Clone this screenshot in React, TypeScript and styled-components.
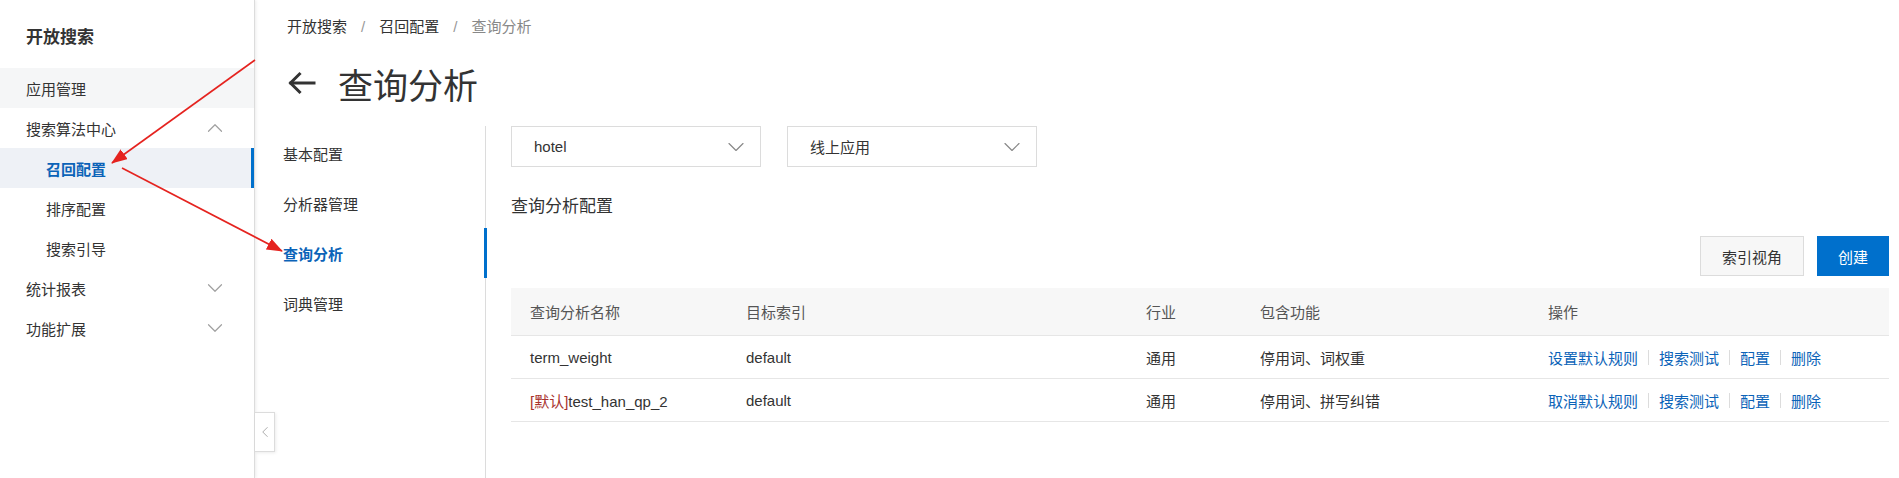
import React from "react";
import styled, { createGlobalStyle } from "styled-components";
import { ChevronDown, ChevronUp, ChevronLeft } from "lucide-react";

const GlobalStyle = createGlobalStyle`
  html, body {
    margin: 0;
    padding: 0;
    background: #fff;
  }
  body {
    font-family: "Liberation Sans", "Noto Sans CJK SC", sans-serif;
    color: #333;
  }
  * {
    box-sizing: border-box;
  }
`;

const Page = styled.div`
  position: relative;
  display: flex;
  width: 100%;
  height: 100vh;
  overflow: hidden;
`;

const Sidebar = styled.aside`
  position: relative;
  width: 255px;
  flex-shrink: 0;
  height: 100%;
  background: #fff;
  border-right: 1px solid #dcdcdc;
  box-shadow: 1px 0 3px rgba(0, 0, 0, 0.08);
  z-index: 1;
`;

const SideTitle = styled.div`
  height: 68px;
  padding: 27px 0 0 26px;
  font-size: 17px;
  font-weight: 700;
  line-height: 22px;
  color: #333;
`;

const MenuRow = styled.div<{ $sub?: boolean; $active?: boolean; $shade?: boolean }>`
  position: relative;
  display: flex;
  align-items: center;
  justify-content: space-between;
  height: 40px;
  padding: 0 26px 0 ${(p) => (p.$sub ? "46px" : "26px")};
  font-size: 15px;
  color: ${(p) => (p.$active ? "#0b63b8" : "#333")};
  font-weight: ${(p) => (p.$active ? 700 : 400)};
  background: ${(p) => (p.$active ? "#eef1f6" : p.$shade ? "#f5f6f7" : "transparent")};

  &::after {
    content: "";
    display: ${(p) => (p.$active ? "block" : "none")};
    position: absolute;
    right: 0;
    top: 0;
    bottom: 0;
    width: 3px;
    background: #0070cc;
  }

  & > svg {
    color: #a0a0a0;
  }
`;

const CollapseTab = styled.div`
  position: absolute;
  top: 412px;
  right: -21px;
  width: 20px;
  height: 40px;
  display: flex;
  align-items: center;
  justify-content: center;
  background: #fff;
  border: 1px solid #dcdcdc;
  border-left: none;
  box-shadow: 1px 1px 3px rgba(0, 0, 0, 0.08);
  color: #aaa;
`;

const Main = styled.main`
  flex: 1;
  display: flex;
  flex-direction: column;
  min-width: 0;
`;

const Header = styled.div`
  padding: 17px 0 0 32px;
`;

const Crumbs = styled.div`
  display: flex;
  align-items: center;
  gap: 14px;
  font-size: 15px;
  line-height: 20px;
  color: #333;
`;

const Crumb = styled.span<{ $current?: boolean }>`
  color: ${(p) => (p.$current ? "#888" : "#333")};
`;

const Slash = styled.span`
  color: #999;
`;

const TitleRow = styled.h1`
  display: flex;
  align-items: center;
  gap: 22px;
  margin: 24px 0 0;
  height: 44px;
  font-size: 35px;
  font-weight: 400;
  color: #333;
`;

const Body = styled.div`
  flex: 1;
  display: flex;
  margin-top: 21px;
`;

const SubNav = styled.nav`
  width: 231px;
  flex-shrink: 0;
  border-right: 1px solid #dcdcdc;
  padding-top: 2px;
`;

const SubItem = styled.div<{ $active?: boolean }>`
  position: relative;
  height: 50px;
  display: flex;
  align-items: center;
  padding-left: 28px;
  font-size: 15px;
  color: ${(p) => (p.$active ? "#0b63b8" : "#333")};
  font-weight: ${(p) => (p.$active ? 700 : 400)};

  &::after {
    content: "";
    display: ${(p) => (p.$active ? "block" : "none")};
    position: absolute;
    right: -2px;
    top: 0;
    bottom: 0;
    width: 3px;
    background: #0070cc;
  }
`;

const Content = styled.section`
  flex: 1;
  padding: 0 10px 0 25px;
`;

const Filters = styled.div`
  display: flex;
  gap: 26px;
`;

const Select = styled.div`
  width: 250px;
  height: 41px;
  display: flex;
  align-items: center;
  justify-content: space-between;
  padding: 0 10px 0 22px;
  border: 1px solid #dcdcdc;
  font-size: 15px;
  color: #333;

  & > svg {
    color: #888;
  }
`;

const SectionTitle = styled.h2`
  margin: 28px 0 0;
  font-size: 17px;
  font-weight: 400;
  line-height: 24px;
  color: #333;
`;

const Actions = styled.div`
  display: flex;
  justify-content: flex-end;
  gap: 13px;
  margin-top: 17px;
`;

const Button = styled.button<{ $primary?: boolean }>`
  height: 40px;
  padding: 0 ${(p) => (p.$primary ? "20px" : "21px")};
  font-family: inherit;
  font-size: 15px;
  border: 1px solid ${(p) => (p.$primary ? "#0070cc" : "#dcdcdc")};
  background: ${(p) => (p.$primary ? "#0070cc" : "#f7f7f7")};
  color: ${(p) => (p.$primary ? "#fff" : "#333")};
`;

const Table = styled.div`
  margin-top: 12px;
`;

const Row = styled.div<{ $head?: boolean }>`
  display: grid;
  grid-template-columns: 216px 400px 114px 288px 1fr;
  align-items: center;
  height: ${(p) => (p.$head ? "48px" : "43px")};
  background: ${(p) => (p.$head ? "#f7f7f7" : "#fff")};
  border-bottom: 1px solid #e6e6e6;
  font-size: 15px;
  color: ${(p) => (p.$head ? "#555" : "#333")};
`;

const Cell = styled.div`
  padding-left: 19px;
  white-space: nowrap;
`;

const Tag = styled.span`
  color: #a8322d;
`;

const Links = styled.div`
  display: flex;
  align-items: center;
  padding-left: 19px;
`;

const LinkText = styled.a`
  color: #0b63b8;
  text-decoration: none;
  white-space: nowrap;
`;

const Sep = styled.span`
  width: 1px;
  height: 15px;
  margin: 0 10px;
  background: #dcdcdc;
`;

const Overlay = styled.svg`
  position: absolute;
  left: 0;
  top: 0;
  width: 100%;
  height: 100%;
  pointer-events: none;
  z-index: 5;
`;

const rows = [
  { tag: "", name: "term_weight", index: "default", industry: "通用", features: "停用词、词权重", first: "设置默认规则" },
  { tag: "[默认]", name: "test_han_qp_2", index: "default", industry: "通用", features: "停用词、拼写纠错", first: "取消默认规则" },
];

export default function App() {
  return (
    <>
      <GlobalStyle />
      <Page>
        <Sidebar>
          <SideTitle>开放搜索</SideTitle>
          <MenuRow $shade>应用管理</MenuRow>
          <MenuRow>
            搜索算法中心
            <ChevronUp size={26} strokeWidth={1.1} />
          </MenuRow>
          <MenuRow $sub $active>召回配置</MenuRow>
          <MenuRow $sub>排序配置</MenuRow>
          <MenuRow $sub>搜索引导</MenuRow>
          <MenuRow>
            统计报表
            <ChevronDown size={26} strokeWidth={1.1} />
          </MenuRow>
          <MenuRow>
            功能扩展
            <ChevronDown size={26} strokeWidth={1.1} />
          </MenuRow>
          <CollapseTab>
            <ChevronLeft size={18} strokeWidth={1.3} />
          </CollapseTab>
        </Sidebar>

        <Main>
          <Header>
            <Crumbs>
              <Crumb>开放搜索</Crumb>
              <Slash>/</Slash>
              <Crumb>召回配置</Crumb>
              <Slash>/</Slash>
              <Crumb $current>查询分析</Crumb>
            </Crumbs>
            <TitleRow>
              <svg width="29" height="24" viewBox="0 0 29 24" fill="none" stroke="#333" strokeWidth="3" strokeLinecap="square">
                <path d="M27 12H4" />
                <path d="M12.5 3L3.5 12l9 9" />
              </svg>
              查询分析
            </TitleRow>
          </Header>

          <Body>
            <SubNav>
              <SubItem>基本配置</SubItem>
              <SubItem>分析器管理</SubItem>
              <SubItem $active>查询分析</SubItem>
              <SubItem>词典管理</SubItem>
            </SubNav>

            <Content>
              <Filters>
                <Select>
                  hotel
                  <ChevronDown size={28} strokeWidth={1} />
                </Select>
                <Select>
                  线上应用
                  <ChevronDown size={28} strokeWidth={1} />
                </Select>
              </Filters>

              <SectionTitle>查询分析配置</SectionTitle>

              <Actions>
                <Button>索引视角</Button>
                <Button $primary>创建</Button>
              </Actions>

              <Table>
                <Row $head>
                  <Cell>查询分析名称</Cell>
                  <Cell>目标索引</Cell>
                  <Cell>行业</Cell>
                  <Cell>包含功能</Cell>
                  <Cell>操作</Cell>
                </Row>
                {rows.map((r) => (
                  <Row key={r.name}>
                    <Cell>
                      {r.tag && <Tag>{r.tag}</Tag>}
                      {r.name}
                    </Cell>
                    <Cell>{r.index}</Cell>
                    <Cell>{r.industry}</Cell>
                    <Cell>{r.features}</Cell>
                    <Links>
                      <LinkText>{r.first}</LinkText>
                      <Sep />
                      <LinkText>搜索测试</LinkText>
                      <Sep />
                      <LinkText>配置</LinkText>
                      <Sep />
                      <LinkText>删除</LinkText>
                    </Links>
                  </Row>
                ))}
              </Table>
            </Content>
          </Body>
        </Main>

        {/* red annotation arrows drawn over the screenshot */}
        <Overlay viewBox="0 0 1899 478" preserveAspectRatio="none">
          <defs>
            <marker id="head" viewBox="0 0 16 12" refX="15" refY="6" markerWidth="16" markerHeight="12" markerUnits="userSpaceOnUse" orient="auto">
              <path d="M0 0L16 6L0 12z" fill="#e5231f" />
            </marker>
          </defs>
          <line x1="255" y1="60" x2="112" y2="163" stroke="#e5231f" strokeWidth="1.6" markerEnd="url(#head)" />
          <line x1="122" y1="168" x2="282" y2="251" stroke="#e5231f" strokeWidth="1.6" markerEnd="url(#head)" />
        </Overlay>
      </Page>
    </>
  );
}
